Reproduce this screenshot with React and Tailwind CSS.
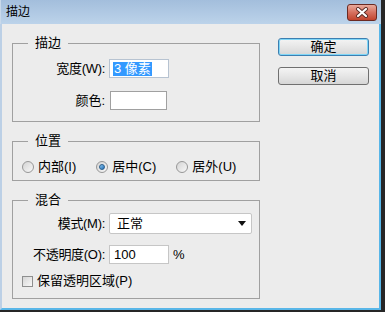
import React from "react"

const font = "font-['Liberation_Sans','Noto_Sans_CJK_SC',sans-serif]"

function Group({ title, children, className = "" }) {
  return (
    <fieldset className={`border border-[#a0a0a0] ${className}`}>
      <legend className="ml-[15px] px-[7px] text-[13px] leading-[16px] text-black">{title}</legend>
      {children}
    </fieldset>
  )
}

function Radio({ checked, label }) {
  return (
    <div className="flex items-center gap-[4px]">
      <div className="w-[12px] h-[12px] rounded-full border border-[#979797] bg-gradient-to-br from-[#d4d4d4] to-[#f8f8f8] flex items-center justify-center">
        {checked && (
          <div className="w-[6px] h-[6px] rounded-full bg-gradient-to-br from-[#8cc8f0] to-[#1f6fb8] border border-[#2a5e8c]" />
        )}
      </div>
      <span className="text-[13px] leading-[16px]">{label}</span>
    </div>
  )
}

function Button({ label, primary }) {
  return (
    <button
      className={`w-[91px] h-[18px] rounded-[3px] border text-[13px] leading-[16px] text-black bg-gradient-to-b from-[#f4f4f4] via-[#e6e6e6] to-[#d6d6d6] ${
        primary ? "border-[#3c7fb1] shadow-[inset_0_0_0_1px_#7fd6f7]" : "border-[#707070]"
      }`}
    >
      {label}
    </button>
  )
}

export default function App() {
  return (
    <div className={`w-[385px] h-[312px] bg-[#262626] overflow-hidden ${font}`}>
      <div className="w-[381px] h-[310px] flex flex-col">
        {/* title bar */}
        <div className="h-[24px] flex items-start bg-gradient-to-b from-[#a3bedc] to-[#bcd3ea] border-l border-[#c9d9ea]">
          <span className="ml-[5px] mt-[4px] text-[12px] leading-[16px] text-black">描边</span>
          <div className="ml-auto mr-[4px] mt-[4px] w-[30px] h-[17px] rounded-[3px] border border-[#6b2a22] bg-gradient-to-b from-[#e8aa9c] via-[#d6705f] to-[#c2432c] flex items-center justify-center">
            <svg width="14" height="11" viewBox="0 0 14 11">
              <path d="M3 2 L11 9 M11 2 L3 9" stroke="#5a2a24" strokeWidth="4" strokeLinecap="round" />
              <path d="M3 2 L11 9 M11 2 L3 9" stroke="#ffffff" strokeWidth="2.2" strokeLinecap="round" />
            </svg>
          </div>
        </div>

        {/* body */}
        <div className="flex-1 flex bg-[#ececec] border-l-2 border-l-[#bcd0e6] border-r-2 border-r-[#58b6e8] border-b-2 border-b-[#58b6e8]">
          <div className="ml-[10px] w-[248px] flex flex-col pt-[11px]">
            <Group title="描边">
              <div className="pt-[8px] pb-[11px] flex flex-col gap-[13px]">
                <div className="flex items-center">
                  <span className="w-[92px] text-right text-[13px] leading-[16px] tracking-[-0.3px]">宽度(W):</span>
                  <div className="ml-[4px] w-[60px] h-[19px] border border-[#b7c3d1] bg-white flex items-center pl-[3px]">
                    <span className="bg-[#3399ff] text-white text-[13px] leading-[14px] px-[1px] whitespace-pre">3 像素</span>
                  </div>
                </div>
                <div className="flex items-center">
                  <span className="w-[92px] text-right text-[13px] leading-[16px]">颜色:</span>
                  <div className="ml-[5px] w-[57px] h-[19px] border border-[#a0a0a0] bg-white" />
                </div>
              </div>
            </Group>

            <Group title="位置" className="mt-[11px]">
              <div className="pt-[10px] pb-[5px] pl-[9px] flex items-center gap-[20px]">
                <Radio label="内部(I)" />
                <Radio checked label="居中(C)" />
                <Radio label="居外(U)" />
              </div>
            </Group>

            <Group title="混合" className="mt-[11px]">
              <div className="pt-[5px] pb-[9px] flex flex-col">
                <div className="flex items-center">
                  <span className="w-[92px] text-right text-[13px] leading-[16px] tracking-[-0.3px]">模式(M):</span>
                  <div className="ml-[4px] w-[143px] h-[21px] border border-[#c6c6c6] rounded-[2px] bg-white flex items-center pl-[7px] pr-[5px]">
                    <span className="text-[13px] leading-[16px]">正常</span>
                    <svg className="ml-auto" width="8" height="5" viewBox="0 0 8 5">
                      <path d="M0 0 H8 L4 5 Z" fill="#111" />
                    </svg>
                  </div>
                </div>
                <div className="mt-[11px] flex items-center">
                  <span className="w-[92px] text-right text-[13px] leading-[16px] tracking-[-0.3px]">不透明度(O):</span>
                  <div className="ml-[4px] w-[60px] h-[19px] border border-[#c6c6c6] bg-white flex items-center pl-[4px]">
                    <span className="text-[13px] leading-[16px]">100</span>
                  </div>
                  <span className="ml-[4px] text-[13px] leading-[16px]">%</span>
                </div>
                <div className="mt-[9px] pl-[9px] flex items-center gap-[4px]">
                  <div className="w-[11px] h-[11px] border border-[#8e8f8f] bg-gradient-to-br from-[#d6d6d6] to-[#f8f8f8]" />
                  <span className="text-[13px] leading-[16px]">保留透明区域(P)</span>
                </div>
              </div>
            </Group>
          </div>

          <div className="ml-[18px] pt-[14px] flex flex-col gap-[11px]">
            <Button primary label="确定" />
            <Button label="取消" />
          </div>
        </div>
      </div>
    </div>
  )
}
